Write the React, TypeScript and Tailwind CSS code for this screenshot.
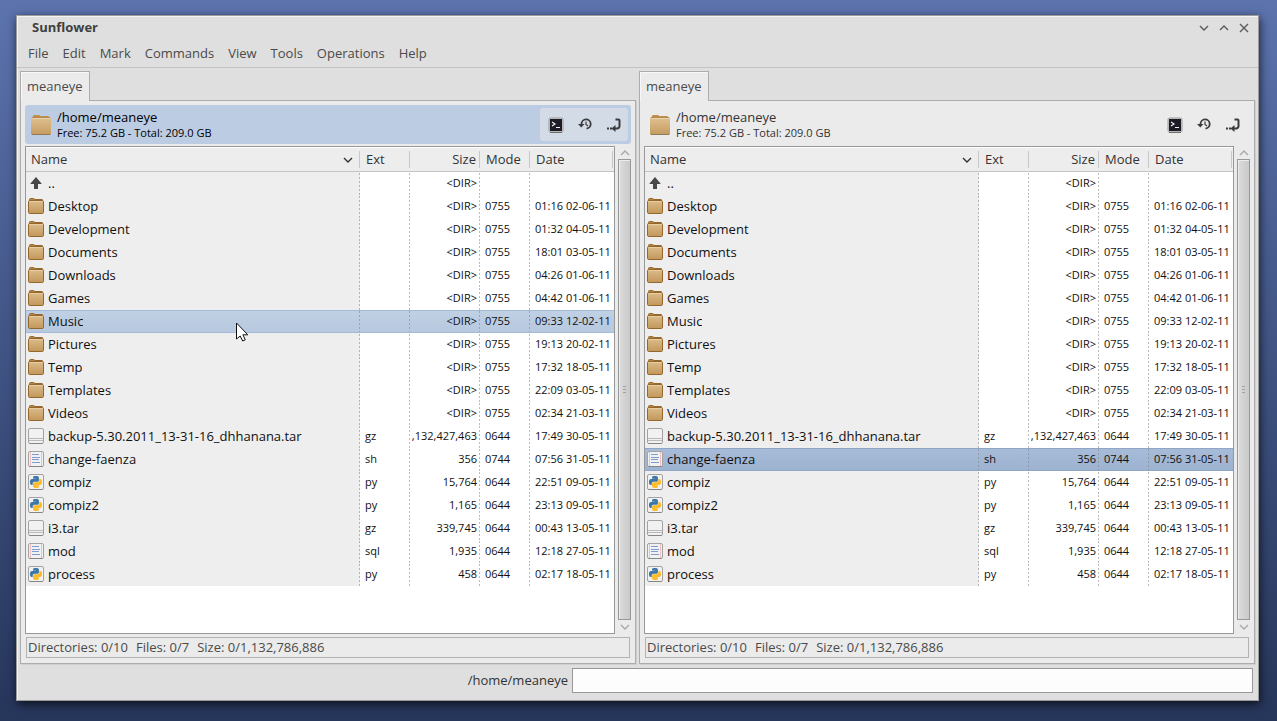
import { useId, useState } from "react";
import clsx from "clsx";

type FileKind = "up" | "folder" | "archive" | "script" | "python";

interface Entry {
  name: string;
  kind: FileKind;
  ext?: string;
  size: string;
  mode?: string;
  date?: string;
}

const folder = (name: string, date: string): Entry => ({
  name,
  kind: "folder",
  size: "<DIR>",
  mode: "0755",
  date,
});

const entries: Entry[] = [
  { name: "..", kind: "up", size: "<DIR>" },
  folder("Desktop", "01:16 02-06-11"),
  folder("Development", "01:32 04-05-11"),
  folder("Documents", "18:01 03-05-11"),
  folder("Downloads", "04:26 01-06-11"),
  folder("Games", "04:42 01-06-11"),
  folder("Music", "09:33 12-02-11"),
  folder("Pictures", "19:13 20-02-11"),
  folder("Temp", "17:32 18-05-11"),
  folder("Templates", "22:09 03-05-11"),
  folder("Videos", "02:34 21-03-11"),
  {
    name: "backup-5.30.2011_13-31-16_dhhanana.tar",
    kind: "archive",
    ext: "gz",
    size: ",132,427,463",
    mode: "0644",
    date: "17:49 30-05-11",
  },
  { name: "change-faenza", kind: "script", ext: "sh", size: "356", mode: "0744", date: "07:56 31-05-11" },
  { name: "compiz", kind: "python", ext: "py", size: "15,764", mode: "0644", date: "22:51 09-05-11" },
  { name: "compiz2", kind: "python", ext: "py", size: "1,165", mode: "0644", date: "23:13 09-05-11" },
  { name: "i3.tar", kind: "archive", ext: "gz", size: "339,745", mode: "0644", date: "00:43 13-05-11" },
  { name: "mod", kind: "script", ext: "sql", size: "1,935", mode: "0644", date: "12:18 27-05-11" },
  { name: "process", kind: "python", ext: "py", size: "458", mode: "0644", date: "02:17 18-05-11" },
];

const menus = ["File", "Edit", "Mark", "Commands", "View", "Tools", "Operations", "Help"];

const PYTHON_SNAKE =
  "M14.25.18l.9.2.73.26.59.3.45.32.34.34.25.34.16.33.1.3.04.26.02.2-.01.13V8.5l-.05.63-.13.55-.21.46-.26.38-.3.31-.33.25-.35.19-.35.14-.33.1-.3.07-.26.04-.21.02H8.77l-.69.05-.59.14-.5.22-.41.27-.33.32-.27.35-.2.36-.15.37-.1.35-.07.32-.04.27-.02.21v3.06H3.17l-.21-.03-.28-.07-.32-.12-.35-.18-.36-.26-.36-.36-.35-.46-.32-.59-.28-.73-.21-.88-.14-1.05-.05-1.23.06-1.22.16-1.04.24-.87.32-.71.36-.57.4-.44.42-.33.42-.24.4-.16.36-.1.32-.05.24-.01h.16l.06.01h8.16v-.83H6.18l-.01-2.75-.02-.37.05-.34.11-.31.17-.28.25-.26.31-.23.38-.2.44-.18.51-.15.58-.12.64-.1.71-.06.77-.04.84-.02 1.27.05z";

function FolderIcon() {
  const id = useId();
  return (
    <svg viewBox="0 0 16 16" className="size-4 shrink-0" aria-hidden="true">
      <defs>
        <linearGradient id={id} x1="0" y1="0" x2="0" y2="1">
          <stop offset="0" stopColor="#dcbd8b" />
          <stop offset="1" stopColor="#c2975a" />
        </linearGradient>
      </defs>
      <path d="M1.5 3V1.5q0-1 1-1h3q1 0 1 1H14q.5 0 .5.5v1z" fill="#b98742" stroke="#94682c" />
      <rect x="0.5" y="2.5" width="15" height="13" rx="1.2" fill={`url(#${id})`} stroke="#94682c" />
      <path d="M1.5 3.5h13" stroke="#e6cda3" />
    </svg>
  );
}

function PathFolderIcon() {
  const id = useId();
  return (
    <svg viewBox="0 0 22 22" className="size-[22px] shrink-0" aria-hidden="true">
      <defs>
        <linearGradient id={id} x1="0" y1="0" x2="0" y2="1">
          <stop offset="0" stopColor="#dfc291" />
          <stop offset="1" stopColor="#c59b60" />
        </linearGradient>
      </defs>
      <path d="M3 5V2q0-1 1-1h5q1 0 1 1h8q1 0 1 1v2z" fill="#c1904f" />
      <rect x="1" y="3" width="20" height="18" rx="1.5" fill={`url(#${id})`} />
      <path d="M2 3.5h18" stroke="#b28a50" />
      <path d="M2 4.5h18" stroke="#ead5b0" />
      <path d="M2 20.5h18" stroke="#8f7a58" />
    </svg>
  );
}

function Sheet({ children }: { children: React.ReactNode }) {
  return (
    <svg viewBox="0 0 16 16" className="size-4 shrink-0" aria-hidden="true">
      <rect x="0.5" y="0.5" width="15" height="15" rx="1.5" fill="#f1f1f1" stroke="#a3a3a3" />
      <path d="M1.5 15.5h13" stroke="#858585" />
      {children}
    </svg>
  );
}

function EntryIcon({ kind }: { kind: FileKind }) {
  if (kind === "folder") return <FolderIcon />;

  if (kind === "up") {
    return (
      <svg viewBox="0 0 16 16" className="size-4 shrink-0" aria-hidden="true">
        <path d="M8 2l5.5 6.5V9H10v5H6V9H2.5v-.5z" fill="#474747" />
      </svg>
    );
  }

  if (kind === "archive") {
    return (
      <Sheet>
        <path d="M1 10.5h14M1 12.5h14" stroke="#b9b9b9" />
      </Sheet>
    );
  }

  if (kind === "script") {
    return (
      <Sheet>
        <path d="M2.5 1v14M13.5 1v14" stroke="#efc0c0" />
        <path d="M4 3.5h7M4 6.5h8M4 8.5h7M4 11.5h8" stroke="#7f9cce" />
      </Sheet>
    );
  }

  return (
    <Sheet>
      <g transform="translate(2 2) scale(0.5)">
        <path d={PYTHON_SNAKE} fill="#3d76a8" />
        <path d={PYTHON_SNAKE} fill="#fdbb26" transform="rotate(180 12 12)" />
      </g>
    </Sheet>
  );
}

function Chevron({ up = false }: { up?: boolean }) {
  return (
    <svg viewBox="0 0 10 6" className="w-2.5" fill="none" stroke="currentColor" aria-hidden="true">
      <path d={up ? "M1 5l4-4 4 4" : "M1 1l4 4 4-4"} strokeWidth="1.4" />
    </svg>
  );
}

function TerminalIcon() {
  return (
    <svg viewBox="0 0 16 16" className="size-4" aria-hidden="true">
      <rect x="1" y="1" width="14" height="14" rx="1.5" fill="#d5d5d5" stroke="#9a9a9a" />
      <path d="M2 15.5h12" stroke="#6d6d6d" />
      <rect x="2" y="2" width="12" height="12" fill="#1d1b26" />
      <path d="M4 5l3 2-3 2M8 10.5h4" fill="none" stroke="#f2f2f2" strokeWidth="1.2" />
    </svg>
  );
}

function HistoryIcon() {
  return (
    <svg viewBox="0 0 16 16" className="size-4" fill="none" stroke="#3c3c3c" aria-hidden="true">
      <path d="M4.500 7a4.600 4.600 0 1 1 5 4.600" strokeWidth="1.8" />
      <path d="M1 7h6.500L4.300 10.500z" fill="#3c3c3c" stroke="none" />
      <path d="M9 4.500v3L11 9" strokeWidth="1.2" />
    </svg>
  );
}

function JumpIcon() {
  return (
    <svg viewBox="0 0 16 16" className="size-4" fill="none" stroke="#3c3c3c" aria-hidden="true">
      <path d="M9.500 2.500h3q1 0 1 1V9q0 2-2 2.500H9" strokeWidth="2" />
      <path d="M5.500 11.500L9.500 8v7z" fill="#3c3c3c" stroke="none" />
      <path d="M1 10.500h2v2H1zM4 10.500h2v2H4z" fill="#3c3c3c" stroke="none" />
    </svg>
  );
}

const cellLine =
  "bg-[linear-gradient(#7a7a7a_1px,transparent_1px)] bg-[length:1px_4px] bg-repeat-y bg-right";

function FileTable({ selected, active, onSelect }: {
  selected: number;
  active: boolean;
  onSelect: (index: number) => void;
}) {
  const heading = "border-t border-b border-t-white border-b-[#c4c4c4] p-0 font-normal";
  const label = "flex h-[17px] items-center border-r border-[#c8c8c8]";

  return (
    <table className="w-full table-fixed border-separate border-spacing-0 text-left">
      <colgroup>
        <col />
        <col className="w-[50px]" />
        <col className="w-[70px]" />
        <col className="w-[50px]" />
        <col className="w-[84px]" />
      </colgroup>
      <thead className="bg-[#ededed] text-[#333333]">
        <tr className="h-[25px]">
          <th className={heading}>
            <div className={clsx(label, "justify-between pl-[5px] pr-1.5")}>
              Name
              <Chevron />
            </div>
          </th>
          <th className={heading}><div className={clsx(label, "pl-1.5")}>Ext</div></th>
          <th className={heading}><div className={clsx(label, "justify-end pr-[3px]")}>Size</div></th>
          <th className={heading}><div className={clsx(label, "pl-1.5")}>Mode</div></th>
          <th className={heading}><div className={clsx(label, "mr-px pl-1.5")}>Date</div></th>
        </tr>
      </thead>
      <tbody className="text-[11px] text-[#101010]">
        {entries.map((entry, index) => {
          const isSelected = index === selected;
          return (
            <tr
              key={entry.name}
              aria-selected={isSelected}
              onClick={() => onSelect(index)}
              className={clsx(
                "h-[23px] *:p-0",
                isSelected && active &&
                  "bg-linear-to-b from-[#c0d0e5] to-[#b7c9df] *:shadow-[inset_0_1px_0_#a5bad6,inset_0_-1px_0_#a5bad6]",
                isSelected && !active &&
                  "bg-linear-to-b from-[#a8bcd8] to-[#9cb2d0] *:shadow-[inset_0_1px_0_#8fa6c6,inset_0_-1px_0_#8fa6c6]",
              )}
            >
              <td className={clsx(cellLine, "align-top", !isSelected && "bg-[#eeeeee]")}>
                <div className="flex h-[22px] items-center gap-1 pl-0.5 text-[13px] leading-5">
                  <EntryIcon kind={entry.kind} />
                  <span className="truncate">{entry.name}</span>
                </div>
              </td>
              <td className={cellLine}><div className="pl-[5px]">{entry.ext}</div></td>
              <td className={cellLine}><div className="pr-[3px] text-right">{entry.size}</div></td>
              <td className={cellLine}><div className="pl-[5px]">{entry.mode}</div></td>
              <td><div className="pl-[5px] whitespace-nowrap">{entry.date}</div></td>
            </tr>
          );
        })}
      </tbody>
    </table>
  );
}

function ScrollBar() {
  return (
    <div className="flex w-[13px] flex-col items-center text-[#a8a8a8]">
      <button type="button" aria-label="Scroll up" className="flex h-[13px] items-center">
        <Chevron up />
      </button>
      <div className="flex w-full flex-1 flex-col items-center justify-center gap-0.5 border border-[#989898] bg-linear-to-r from-[#dcdcdc] to-[#c9c9c9] shadow-[inset_1px_1px_0_#ececec]">
        <span className="h-px w-[3px] bg-[#a0a0a0]" />
        <span className="h-px w-[3px] bg-[#a0a0a0]" />
        <span className="h-px w-[3px] bg-[#a0a0a0]" />
      </div>
      <button type="button" aria-label="Scroll down" className="flex h-[14px] items-center">
        <Chevron />
      </button>
    </div>
  );
}

function Panel({ active = false, initial }: { active?: boolean; initial: number }) {
  const [selected, setSelected] = useState(initial);

  return (
    <section className="flex min-w-0 flex-1 flex-col">
      <div role="tablist" className="z-10 -mb-px flex">
        <button
          type="button"
          role="tab"
          aria-selected="true"
          className="h-[30px] border border-b-0 border-[#adadad] bg-[#ebebeb] px-1.5 text-[#4a4a4a] shadow-[inset_1px_1px_0_#f8f8f8]"
        >
          meaneye
        </button>
      </div>
      <div className="flex flex-1 flex-col border border-[#adadad] bg-[#ebebeb] p-1 shadow-[1px_1px_0_#cfcfcf]">
        <div
          className={clsx(
            "flex h-[39px] items-center justify-between rounded-[3px] py-[3px] pr-[3px] pl-[5px]",
            active && "bg-[#bccce3]",
          )}
        >
          <div className="flex items-center gap-[5px]">
            <PathFolderIcon />
            <div className={active ? "text-black" : "text-[#333333]"}>
              <div className="leading-4">/home/meaneye</div>
              <div className="text-[11px] leading-[15px]">Free: 75.2 GB - Total: 209.0 GB</div>
            </div>
          </div>
          <div className={clsx("flex h-full rounded-[3px] pl-px *:flex *:w-[29px] *:items-center *:justify-center", active && "bg-[#d3dbe7]")}>
            <button type="button" aria-label="Open terminal"><TerminalIcon /></button>
            <button type="button" aria-label="History"><HistoryIcon /></button>
            <button type="button" aria-label="Bookmarks"><JumpIcon /></button>
          </div>
        </div>
        <div className="mt-0.5 flex flex-1 gap-[3px]">
          <div className="flex-1 border border-[#989898] bg-white">
            <FileTable selected={selected} active={active} onSelect={setSelected} />
          </div>
          <ScrollBar />
        </div>
        <div className="mx-px mt-[3px] mb-px flex h-[21px] items-center gap-2 border border-[#b3b3b3] px-px text-[#4a4a4a]">
          <span>Directories: 0/10</span>
          <span>Files: 0/7</span>
          <span>Size: 0/1,132,786,886</span>
        </div>
      </div>
    </section>
  );
}

function Pointer() {
  return (
    <svg viewBox="0 0 13 20" className="pointer-events-none absolute top-[322px] left-[236px] h-5 w-[13px]" aria-hidden="true">
      <path
        d="M.5 1v16l3.700-3 2.500 5 2.600-1.200-2.400-5h4.900z"
        fill="#fff"
        stroke="#111"
      />
    </svg>
  );
}

export default function App() {
  return (
    <div className="relative flex min-h-screen bg-linear-to-b from-[#5c73ae] to-[#26355a] pt-[15px] pr-[18px] pb-5 pl-4 font-['Open_Sans','Noto_Sans',sans-serif] text-[13px]">
      <main className="flex min-w-0 flex-1 flex-col border border-[#9b9b9b] bg-[#dfdfdf] shadow-[1px_3px_9px_rgba(0,0,0,0.7),inset_1px_1px_0_#f4f4f4]">
        <header className="flex h-6 items-center justify-between pr-[9px] pl-[15px] text-[#3f3f3f]">
          <h1 className="font-bold">Sunflower</h1>
          <div className="flex items-center gap-2.5 text-[#5a5a5a] *:flex *:h-3 *:w-2.5 *:items-center *:justify-center">
            <button type="button" aria-label="Minimize"><Chevron /></button>
            <button type="button" aria-label="Maximize"><Chevron up /></button>
            <button type="button" aria-label="Close">
              <svg viewBox="0 0 10 10" className="size-2.5" stroke="currentColor" strokeWidth="1.4" aria-hidden="true">
                <path d="M1 1l8 8M9 1l-8 8" />
              </svg>
            </button>
          </div>
        </header>
        <nav className="flex h-7 items-center gap-3.5 border-b border-[#c3c3c3] pl-[11px] text-[#4a4a4a]">
          {menus.map((menu) => (
            <button key={menu} type="button">{menu}</button>
          ))}
        </nav>
        <div className="flex flex-1 gap-[3px] px-[3px] pt-[3px]">
          <Panel active initial={6} />
          <Panel initial={12} />
        </div>
        <div className="flex h-9 items-center gap-1 pr-[5px] pb-[3px] text-[#333333]">
          <label htmlFor="command" className="w-[551px] text-right">/home/meaneye</label>
          <input
            id="command"
            type="text"
            className="h-[25px] min-w-0 flex-1 border border-[#989898] bg-[#fdfdfd] px-1 outline-none"
          />
        </div>
      </main>
      <Pointer />
    </div>
  );
}
